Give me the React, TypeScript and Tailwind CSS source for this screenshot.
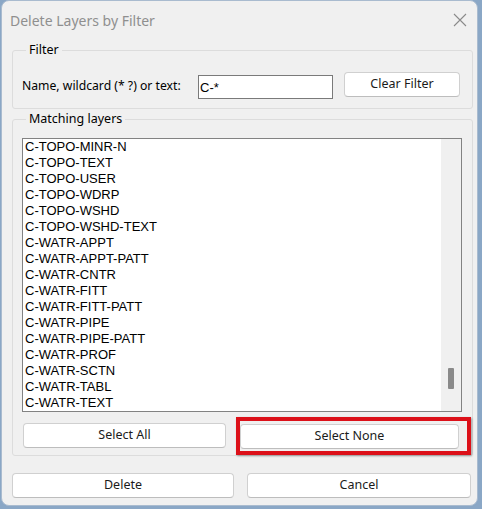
import React from "react";

const layers = [
  "C-TOPO-MINR-N",
  "C-TOPO-TEXT",
  "C-TOPO-USER",
  "C-TOPO-WDRP",
  "C-TOPO-WSHD",
  "C-TOPO-WSHD-TEXT",
  "C-WATR-APPT",
  "C-WATR-APPT-PATT",
  "C-WATR-CNTR",
  "C-WATR-FITT",
  "C-WATR-FITT-PATT",
  "C-WATR-PIPE",
  "C-WATR-PIPE-PATT",
  "C-WATR-PROF",
  "C-WATR-SCTN",
  "C-WATR-TABL",
  "C-WATR-TEXT",
];

const ui = { fontFamily: '"Noto Sans", "Open Sans", sans-serif' };
const arial = { fontFamily: '"Liberation Sans", Arial, sans-serif' };

function Button({ label, className = "" }: { label: string; className?: string }) {
  return (
    <button
      className={
        "h-[25px] rounded-[4px] border border-[#d0d0d0] border-b-[#bdbdbd] bg-white text-[12.5px] text-[#1b1b1b] " +
        className
      }
      style={ui}
    >
      {label}
    </button>
  );
}

export default function App() {
  return (
    <div className="w-[482px] h-[509px] bg-[#8aa7c6] overflow-hidden">
      <div
        className="ml-[1px] w-[477px] h-[506px] rounded-[8px] bg-[#f0f0f0] border border-[#a9bbcf]"
        style={ui}
      >
        {/* title bar */}
        <div className="h-[39px] flex items-center justify-between pl-[8px] pr-[9px]">
          <span className="text-[14px] text-[#8f8f8f] -mt-[1px]">Delete Layers by Filter</span>
          <svg width="16" height="16" viewBox="0 0 16 16" className="-mt-[1px]">
            <path d="M2 2 L14 14 M14 2 L2 14" stroke="#8a8a8a" strokeWidth="1.1" />
          </svg>
        </div>

        <div className="pl-[10px] pr-[4px]">
          {/* Filter group */}
          <fieldset className="mt-[2px] h-[67px] border border-[#dcdcdc] rounded-[3px] pl-[9px] pr-[12px]">
            <legend className="ml-[4px] px-[3px] text-[12.5px] text-black leading-[16px]">Filter</legend>
            <div className="mt-[14px] h-[25px] flex items-start">
              <span className="mt-[6px] w-[176px] text-[12.2px] leading-[16px] text-black">
                Name, wildcard (* ?) or text:
              </span>
              <input
                defaultValue="C-*"
                className="mt-[3px] w-[135px] h-[24px] border border-[#7a7a7a] bg-white px-[1px] text-[13px] text-black outline-none"
                style={arial}
              />
              <Button label="Clear Filter" className="ml-[11px] w-[116px]" />
            </div>
          </fieldset>

          {/* Matching layers group */}
          <fieldset className="mt-[2px] border border-[#dcdcdc] rounded-[3px] pl-[9px] pr-[10px] pb-[6px]">
            <legend className="ml-[4px] px-[3px] text-[12.5px] text-black leading-[16px]">Matching layers</legend>
            <div className="mt-[11px] h-[274px] border border-[#828282] bg-white flex">
              <div className="flex-1 pl-[2px] text-[13px] text-black" style={arial}>
                {layers.map((l) => (
                  <div key={l} className="h-[16px] leading-[16px]">
                    {l}
                  </div>
                ))}
              </div>
              <div className="w-[20px] bg-[#f0f0f0] flex flex-col items-center">
                <div className="mt-[229px] w-[6px] h-[21px] bg-[#8a8a8a] rounded-[1px]" />
              </div>
            </div>
            <div className="mt-[10px] flex items-center">
              <Button label="Select All" className="ml-[1px] w-[203px]" />
              <div className="relative ml-[14px]">
                <Button label="Select None" className="w-[219px] border-[#5f7ea3] border-b-[#3d5f8c]" />
                <div className="absolute left-[-4px] top-[-5px] right-[-12px] bottom-[-6px] border-[4px] border-[#dc1019] shadow-[1px_1px_2px_rgba(0,0,0,0.35)] pointer-events-none" />
              </div>
            </div>
          </fieldset>

          {/* bottom buttons */}
          <div className="mt-[17px] flex items-center">
            <Button label="Delete" className="w-[222px]" />
            <Button label="Cancel" className="ml-[13px] w-[224px]" />
          </div>
        </div>
      </div>
    </div>
  );
}
